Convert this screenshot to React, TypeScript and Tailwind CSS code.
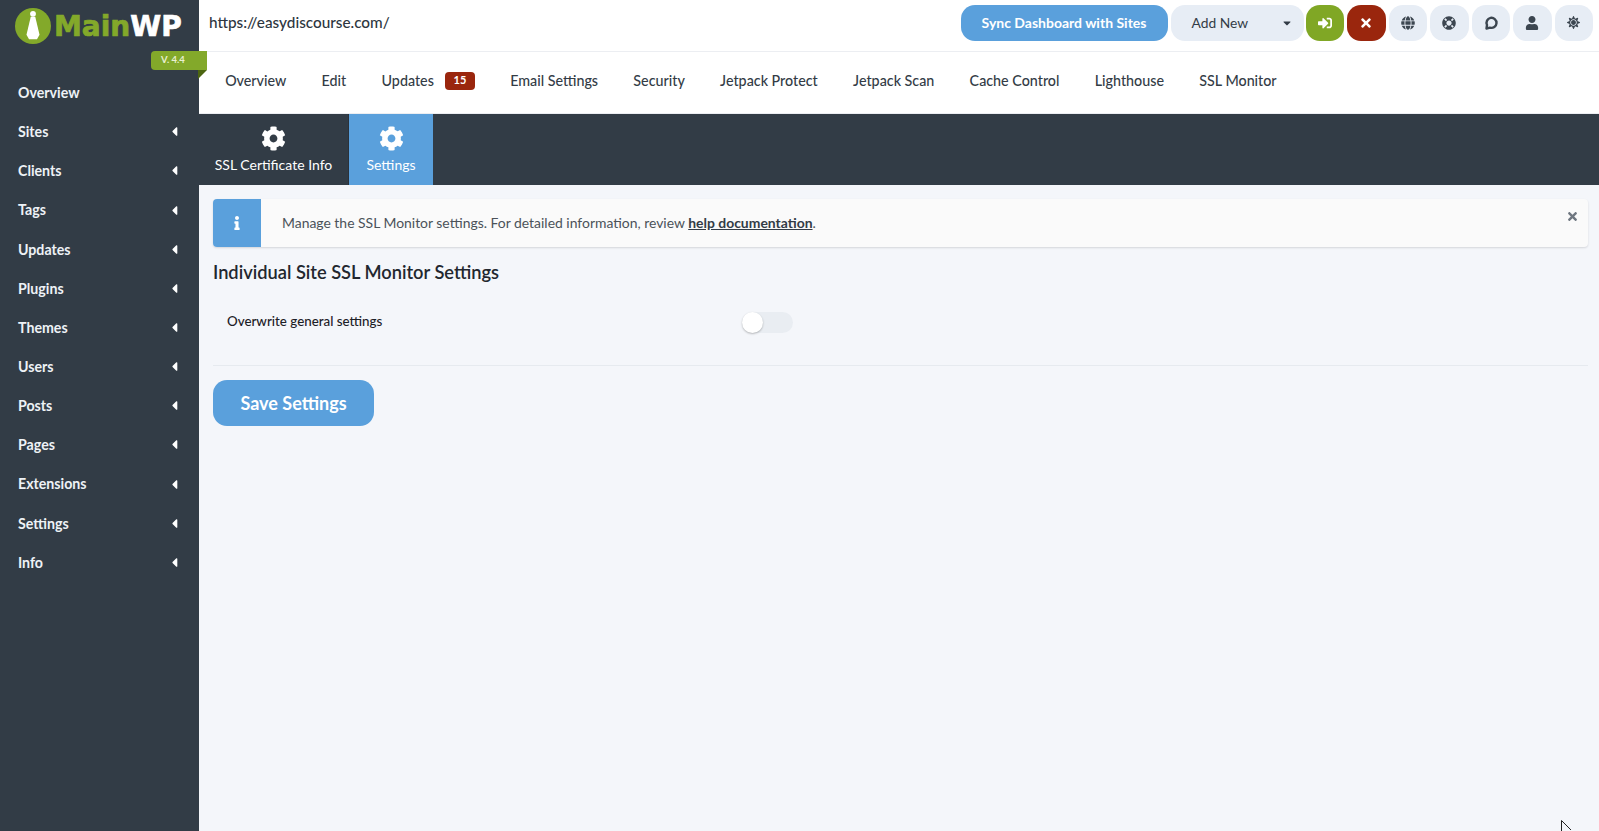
import React from "react";
import { FaCog, FaSignInAlt, FaTimes, FaGlobe, FaLifeRing, FaUser, FaInfo, FaCaretLeft, FaCaretDown, FaSun } from "react-icons/fa";

const side = ["Overview","Sites","Clients","Tags","Updates","Plugins","Themes","Users","Posts","Pages","Extensions","Settings","Info"];
const nav = ["Overview","Edit","Updates","Email Settings","Security","Jetpack Protect","Jetpack Scan","Cache Control","Lighthouse","SSL Monitor"];

function Logo() {
  return (
    <div className="flex items-center pl-[15px] h-[51px]">
      <svg width="36" height="36" viewBox="0 0 37 37" className="shrink-0">
        <circle cx="18.5" cy="18.5" r="18.5" fill="#83a92a" />
        <circle cx="18.5" cy="6" r="3" fill="#fff" />
        <path d="M16.2 9h4.6l4.4 18.5-2.6 4.5h-8.2l-2.6-4.5z" fill="#fff" />
      </svg>
      <span className="ml-[3px] mt-[3px] text-[28px] leading-none font-bold [-webkit-text-stroke:0.7px] font-['DejaVu_Sans',sans-serif] text-[#83a92a]">Main<span className="text-white">WP</span></span>
    </div>
  );
}

function IconBtn({ children, cls }: { children: React.ReactNode; cls: string }) {
  return <button className={`w-[38.5px] h-[36px] rounded-[14px] flex items-center justify-center ${cls}`}>{children}</button>;
}

export default function App() {
  return (
    <div className="flex w-[1599px] h-[831px] overflow-hidden relative bg-[#f4f6fa] font-['Lato',sans-serif]">
      <aside className="w-[199px] shrink-0 bg-[#323c46] relative">
        <Logo />
        <div className="absolute left-[151px] top-[51px] w-[56px] h-[19px] bg-[#83a92a] rounded-l-[4px] text-[9.5px] font-bold text-[#e8f0d0] flex items-center pl-[10px] z-10">V. 4.4</div>
        <div className="absolute left-[198px] top-[70px] w-0 h-0 border-t-[9px] border-t-[#4c6510] border-r-[9px] border-r-transparent z-10" />
        <nav className="pt-[22px]">
          {side.map((s, i) => (
            <div key={s} className="h-[39.17px] pl-[18px] pr-[17px] flex items-center justify-between text-[14.2px] font-bold text-[#eef2f6]">
              <span>{s}</span>
              {i > 0 && <FaCaretLeft className="text-white text-[15px]" />}
            </div>
          ))}
        </nav>
      </aside>
      <main className="flex-1 min-w-0 flex flex-col">
        <header className="h-[52px] bg-white border-b-[1px] border-[#eceef2] flex items-center justify-between pl-[10px] pr-[6px] pb-[6px] pt-[0px]">
          <span className="text-[15.3px] font-medium text-[#2d3640]">https://easydiscourse.com/</span>
          <div className="flex items-center gap-[3px]">
            <button className="w-[207px] h-[36px] rounded-[14px] bg-[#5aa0dc] text-white text-[14px] font-bold">Sync Dashboard with Sites</button>
            <button className="w-[133px] -mr-[1px] h-[36px] rounded-[14px] bg-[#e7edf5] text-[#333c46] text-[13.8px] flex items-center justify-between pl-[21px] pr-[11px] pt-[1px]">
              <span>Add New</span><FaCaretDown className="text-[12px] text-[#333c46]" />
            </button>
            <IconBtn cls="bg-[#80a725] text-white text-[14px]"><FaSignInAlt /></IconBtn>
            <IconBtn cls="bg-[#9a260d] text-white text-[14px]"><FaTimes /></IconBtn>
            <IconBtn cls="bg-[#e7edf5] text-[#3c4650] text-[14px]"><FaGlobe /></IconBtn>
            <IconBtn cls="bg-[#e7edf5] text-[#3c4650] text-[14px]"><FaLifeRing /></IconBtn>
            <IconBtn cls="bg-[#e7edf5] text-[#3c4650] text-[14px]">
              <svg width="14" height="14" viewBox="0 0 14 14" fill="none" stroke="currentColor" strokeWidth="2.4"><path d="M2.5 12.5 L3 9 A5 5 0 1 1 6 11.6 Z" strokeLinejoin="round" /></svg>
            </IconBtn>
            <IconBtn cls="bg-[#e7edf5] text-[#3c4650] text-[14px]"><FaUser /></IconBtn>
            <IconBtn cls="bg-[#e7edf5] text-[#3c4650] text-[13px]"><FaSun /></IconBtn>
          </div>
        </header>
        <div className="h-[61px] bg-white flex items-center pl-[8.5px] pb-[4px] text-[14.3px] font-medium text-[#333c46]">
          {nav.map((n) => (
            <div key={n} className="px-[17.65px] flex items-center">
              <span>{n}</span>
              {n === "Updates" && <span className="ml-[11px] w-[30px] h-[18px] rounded-[4px] bg-[#9a260d] text-white text-[11px] font-bold flex items-center justify-center">15</span>}
            </div>
          ))}
        </div>
        <div className="h-[72px] bg-[#323c46] flex border-t border-[#eceef2]">
          <div className="w-[150px] flex flex-col items-center pt-[12px] text-white border-r border-[#2a323b]">
            <FaCog className="text-[25px]" />
            <span className="text-[14px] mt-[3px]">SSL Certificate Info</span>
          </div>
          <div className="w-[84px] bg-[#5aa0dc] flex flex-col items-center pt-[12px] text-white">
            <FaCog className="text-[25px]" />
            <span className="text-[14px] mt-[3px]">Settings</span>
          </div>
        </div>
        <div className="pl-[14px] pr-[11px] pt-[14px]">
          <div className="h-[48px] flex rounded-[4px] bg-[#fafafa] shadow-[0_1px_2px_rgba(34,36,38,0.15)] overflow-hidden">
            <div className="w-[48px] bg-[#5aa0dc] text-white flex items-center justify-center text-[14px]"><FaInfo /></div>
            <div className="flex-1 pl-[21px] flex items-center text-[13.93px] text-[#4b5259]">
              <span>Manage the SSL Monitor settings. For detailed information, review <a className="font-bold underline text-[#333c46]">help documentation</a>.</span>
            </div>
            <div className="pr-[9px] pt-[11px] text-[#6f7780] text-[13px]"><FaTimes /></div>
          </div>
          <h2 className="mt-[14px] text-[18.25px] font-semibold leading-[22px] text-[#22272e]">Individual Site SSL Monitor Settings</h2>
          <div className="mt-[27px] flex items-center pl-[14px] h-[24px]">
            <span className="w-[515px] pb-[2px] text-[13.35px] font-medium text-[#1c2026]">Overwrite general settings</span>
            <span className="w-[51px] h-[21px] rounded-full bg-[#e9edf2] relative inline-block">
              <span className="absolute left-0 top-0 w-[21px] h-[21px] rounded-full bg-white shadow-[0_1px_2px_rgba(34,36,38,0.3)]" />
            </span>
          </div>
          <div className="mt-[31px] border-t border-[#e6eaef]" />
          <button className="mt-[14px] w-[161px] h-[46px] rounded-[14px] bg-[#5aa0dc] text-white text-[18px] font-bold">Save Settings</button>
        </div>
      </main>
      <svg className="absolute left-[1561px] top-[820px]" width="12" height="11" viewBox="0 0 12 11" fill="none" stroke="#222" strokeWidth="1"><path d="M0.5 0.5V11M0.5 0.5L10 10" /></svg>
    </div>
  );
}
